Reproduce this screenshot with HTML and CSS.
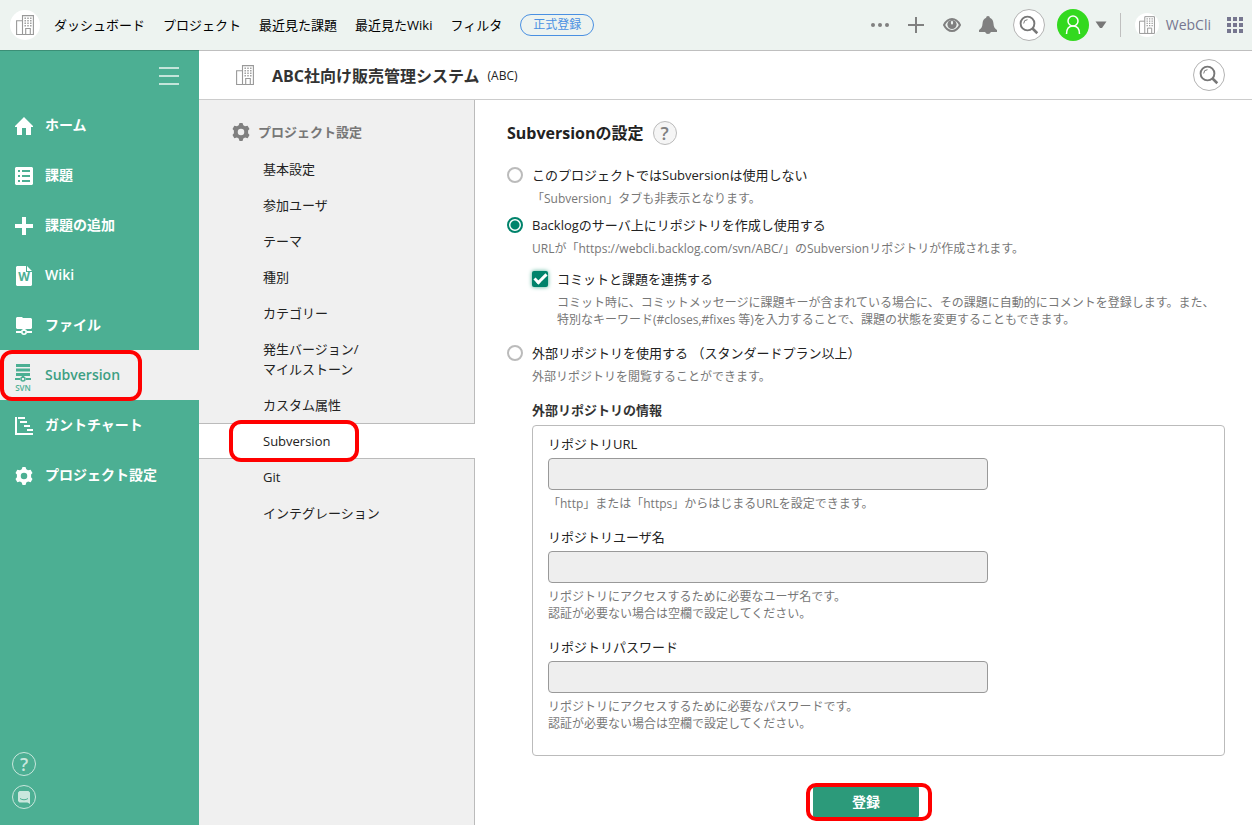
FILE: index.html
```html
<!DOCTYPE html>
<html lang="ja">
<head>
<meta charset="utf-8">
<meta name="viewport" content="width=device-width, initial-scale=1">
<title>Subversionの設定</title>
<link rel="stylesheet" href="styles.css">
</head>
<body>
<svg class="defs" aria-hidden="true">
  <symbol id="building" viewBox="0 0 18 20">
    <path d="M6.5 5.7H.6v13.8H17.4V.6H6.5v18.9M9.7 19.5v-6h4.600v6" fill="none" stroke="currentColor" stroke-width="1.100"/>
    <path d="M9.2 2.500v9M12 2.500v9M14.800 2.500v9" stroke="currentColor" stroke-width="1.400" stroke-dasharray="1.400 1.100"/>
  </symbol>
  <symbol id="search" viewBox="0 0 20 20">
    <circle cx="8.500" cy="8.500" r="6.900" fill="none" stroke="currentColor" stroke-width="1.900"/>
    <path d="M4.700 8.500a3.800 3.800 0 0 1 3.800-3.800" fill="none" stroke="currentColor"/>
    <path d="M13.500 13.500l4.800 4.700" stroke="currentColor" stroke-width="2.600"/>
  </symbol>
  <symbol id="gear" viewBox="0 0 18 18">
    <path fill="currentColor" fill-rule="evenodd" d="M7.500 0h3l.8 2.300 1.700 1 2.600-.6 1.900 3.300-1.400 1.600v2.600l1.400 1.700-1.800 3.300-2.600-.6-1.800 1-.8 2.400h-3l-.8-2.400-1.800-1-2.600.6L.5 11.900l1.400-1.700V7.600L.5 6l1.800-3.300 2.700.6 1.700-1zM9 5.700a3.200 3.200 0 1 0 0 6.500 3.200 3.200 0 0 0 0-6.500z"/>
  </symbol>
</svg>

<header class="topbar">
  <a class="round-logo" href="#" aria-label="スペース"><svg width="18" height="20"><use href="#building"/></svg></a>
  <nav class="top-nav">
    <a href="#">ダッシュボード</a>
    <a href="#">プロジェクト</a>
    <a href="#">最近見た課題</a>
    <a href="#">最近見たWiki</a>
    <a href="#">フィルタ</a>
    <a class="pill" href="#">正式登録</a>
  </nav>
  <div class="tools">
    <button class="tool" aria-label="その他"><svg width="18" height="18" fill="currentColor"><circle cx="2" cy="9" r="2"/><circle cx="9" cy="9" r="2"/><circle cx="16" cy="9" r="2"/></svg></button>
    <button class="tool" aria-label="追加"><svg width="18" height="18"><path d="M9 1v16M1 9h16" stroke="currentColor" stroke-width="2"/></svg></button>
    <button class="tool" aria-label="ウォッチ"><svg width="18" height="18"><path d="M1 9c2-4 4.700-6 8-6s6 2 8 6c-2 4-4.700 6-8 6s-6-2-8-6z" fill="none" stroke="currentColor" stroke-width="2"/><circle cx="9" cy="8.500" r="4.600" fill="currentColor"/><ellipse cx="9" cy="6.700" rx="1.100" ry="1.900" fill="#edf3f0"/></svg></button>
    <button class="tool" aria-label="お知らせ"><svg width="18" height="18" fill="currentColor"><path d="M9 0c1.200 0 1.800.8 1.800 1.700 2.600.9 3.500 3 3.700 6 .2 3.200 1.100 4.800 3.500 6.200V16h-6.200c-.3 1.200-1.400 2-2.800 2s-2.500-.8-2.800-2H0v-2.100c2.400-1.400 3.300-3 3.500-6.200.2-3 1.100-5.100 3.700-6C7.200.8 7.800 0 9 0z"/></svg></button>
  </div>
  <button class="search-button" aria-label="検索"><svg width="20" height="20"><use href="#search"/></svg></button>
  <button class="account" aria-label="アカウント">
    <span class="avatar"><svg width="16" height="20" fill="none" stroke="#fff" stroke-width="1.500"><circle cx="8" cy="6" r="5"/><path d="M1.500 19c0-5 2.500-8 6.500-8s6.500 3 6.500 8"/></svg></span>
    <svg width="12" height="8"><path d="M.5.500h11L7 7H5z" fill="currentColor"/></svg>
  </button>
  <a class="space" href="#">
    <span class="round-logo small"><svg width="16" height="18"><use href="#building"/></svg></span>
    WebCli
  </a>
  <button class="tool apps" aria-label="アプリ"><svg width="16" height="16" fill="currentColor"><path d="M0 0h4v4H0zM6 0h4v4H6zM12 0h4v4h-4zM0 6h4v4H0zM6 6h4v4H6zM12 6h4v4h-4zM0 12h4v4H0zM6 12h4v4H6zM12 12h4v4h-4z"/></svg></button>
</header>

<div class="shell">
  <aside class="sidebar">
    <button class="menu-toggle" aria-label="メニュー"><svg width="20" height="18"><path d="M0 1h20M0 9h20M0 17h20" stroke="currentColor" stroke-width="2"/></svg></button>
    <nav class="side-nav">
      <a href="#"><svg width="18" height="20" fill="currentColor"><path d="M9 1l9 9v1h-2v8h-5v-7H7v7H2v-8H0v-1z"/></svg>ホーム</a>
      <a href="#"><svg width="18" height="20" fill="currentColor"><path fill-rule="evenodd" d="M1 1h16l1 1v16l-1 1H1l-1-1V2zM3 4v2h2V4zm4 0v2h8V4zM3 9v2h2V9zm4 0v2h8V9zM3 14v2h2v-2zm4 0v2h8v-2z"/></svg>課題</a>
      <a href="#"><svg width="18" height="20"><path d="M9 1v18M0 10h18" stroke="currentColor" stroke-width="4"/></svg>課題の追加</a>
      <a href="#"><svg width="18" height="20"><path fill="currentColor" d="M1 1l1-1h9v6h6v13l-1 1H2l-1-1zM12 0l5 5h-5z"/><text class="wiki-letter" x="9" y="15" text-anchor="middle">W</text></svg>Wiki</a>
      <a href="#"><svg width="18" height="20"><path fill="currentColor" d="M1 2l1-1h5l1 1h8l1 1v9l-1 1H2l-1-1z"/><path d="M9 13v2M1 16h5M12 16h5" stroke="currentColor" stroke-width="2"/><circle cx="9" cy="16" r="2.200" fill="none" stroke="currentColor" stroke-width="1.600"/></svg>ファイル</a>
      <a class="current marked" href="#" aria-current="page"><svg width="18" height="34"><path fill="currentColor" d="M1 5h14v3H1zM1 9.500h14v3H1zM1 14h14v3H1z"/><path d="M8 17v2M0 20h5M11 20h5" stroke="currentColor" stroke-width="2"/><circle cx="8" cy="20" r="2" fill="none" stroke="currentColor" stroke-width="1.600"/><text class="svn-letter" x="8" y="32" text-anchor="middle">SVN</text></svg>Subversion</a>
      <a href="#"><svg width="18" height="20"><path d="M1 1v17h17M3 2h7M5 6h7M9 10h6M12 14h6" fill="none" stroke="currentColor" stroke-width="2"/></svg>ガントチャート</a>
      <a href="#"><svg width="18" height="18"><use href="#gear"/></svg>プロジェクト設定</a>
    </nav>
    <div class="side-help">
      <button aria-label="ヘルプ">?</button>
      <button aria-label="メッセージ"><svg width="12" height="13"><path d="M1.500 0h9l1.500 1.500V13l-2.500-1.500h-8L0 10V1.500z" fill="currentColor"/><path d="M2 7.500c2.300 1.700 5.700 1.700 8 0" fill="none" stroke="#4caf93"/></svg></button>
    </div>
  </aside>

  <div class="project">
    <header class="project-bar">
      <svg class="project-icon" width="18" height="20"><use href="#building"/></svg>
      <h1>ABC社向け販売管理システム</h1>
      <span class="project-key">(ABC)</span>
      <button class="search-button" aria-label="プロジェクト内検索"><svg width="20" height="20"><use href="#search"/></svg></button>
    </header>
    <div class="columns">
      <nav class="settings-nav">
        <h2><svg width="18" height="18"><use href="#gear"/></svg>プロジェクト設定</h2>
        <a href="#">基本設定</a>
        <a href="#">参加ユーザ</a>
        <a href="#">テーマ</a>
        <a href="#">種別</a>
        <a href="#">カテゴリー</a>
        <a href="#">発生バージョン/<br>マイルストーン</a>
        <a href="#">カスタム属性</a>
        <a class="selected marked" href="#" aria-current="page">Subversion</a>
        <a href="#">Git</a>
        <a href="#">インテグレーション</a>
        <div class="filler"></div>
      </nav>
      <main class="content">
        <div class="page-title">
          <h2>Subversionの設定</h2>
          <button class="help" aria-label="ヘルプ">?</button>
        </div>
        <form>
          <div class="option">
            <input type="radio" name="mode" id="mode-none">
            <label for="mode-none">このプロジェクトではSubversionは使用しない</label>
            <p>「Subversion」タブも非表示となります。</p>
          </div>
          <div class="option">
            <input type="radio" name="mode" id="mode-backlog" checked>
            <label for="mode-backlog">Backlogのサーバ上にリポジトリを作成し使用する</label>
            <p>URLが「https://webcli.backlog.com/svn/ABC/」のSubversionリポジトリが作成されます。</p>
            <div class="option nested">
              <input type="checkbox" id="link-commit" checked>
              <label for="link-commit">コミットと課題を連携する</label>
              <p>コミット時に、コミットメッセージに課題キーが含まれている場合に、その課題に自動的にコメントを登録します。また、<br>特別なキーワード(#closes,#fixes 等)を入力することで、課題の状態を変更することもできます。</p>
            </div>
          </div>
          <div class="option external">
            <input type="radio" name="mode" id="mode-external">
            <label for="mode-external">外部リポジトリを使用する （スタンダードプラン以上）</label>
            <p>外部リポジトリを閲覧することができます。</p>
          </div>
          <section class="repository">
            <h3>外部リポジトリの情報</h3>
            <div class="panel">
              <div class="field">
                <label for="repo-url">リポジトリURL</label>
                <input type="text" id="repo-url" disabled>
                <p>「http」または「https」からはじまるURLを設定できます。</p>
              </div>
              <div class="field">
                <label for="repo-user">リポジトリユーザ名</label>
                <input type="text" id="repo-user" disabled>
                <p>リポジトリにアクセスするために必要なユーザ名です。<br>認証が必要ない場合は空欄で設定してください。</p>
              </div>
              <div class="field">
                <label for="repo-pass">リポジトリパスワード</label>
                <input type="password" id="repo-pass" disabled>
                <p>リポジトリにアクセスするために必要なパスワードです。<br>認証が必要ない場合は空欄で設定してください。</p>
              </div>
            </div>
          </section>
          <div class="actions"><span class="marked submit-wrap"><button class="submit" type="submit">登録</button></span></div>
        </form>
      </main>
    </div>
  </div>
</div>
</body>
</html>
```
FILE: styles.css
```css
*, *::before, *::after { box-sizing: border-box; }

body {
  margin: 0;
  min-height: 100vh;
  display: flex;
  flex-direction: column;
  background: #fff;
  color: #222;
  font: 13px/20px "Open Sans", "Noto Sans CJK JP", sans-serif;
}

h1, h2, h3, p { margin: 0; }
a { color: inherit; text-decoration: none; }
svg { display: block; flex: none; }
button {
  padding: 0;
  border: 0;
  background: none;
  color: inherit;
  font: inherit;
  cursor: pointer;
}
.defs { position: absolute; width: 0; height: 0; }

/* Hand-drawn emphasis rings */
.marked { position: relative; }
.marked::after {
  content: "";
  position: absolute;
  border: 4px solid #f00;
  border-radius: 12px;
  pointer-events: none;
}

/* Top bar */
.topbar {
  display: flex;
  align-items: center;
  height: 51px;
  padding: 0 9px 0 10px;
  background: #edf3f0;
  border-bottom: 1px solid #bfbfbf;
  white-space: nowrap;
}
.round-logo {
  display: flex;
  align-items: center;
  justify-content: center;
  width: 30px;
  height: 30px;
  border-radius: 50%;
  background: #fff;
  color: #999;
}
.round-logo.small { width: 24px; height: 24px; }
.top-nav {
  display: flex;
  align-items: center;
  gap: 18px;
  margin-left: 14px;
  color: #000;
}
.pill {
  padding: 0 12px;
  border: 1px solid #4a90e2;
  border-radius: 11px;
  color: #4a90e2;
  font-size: 12px;
}
.tools {
  display: flex;
  gap: 18px;
  margin-left: auto;
  margin-right: 16px;
}
.tool { color: #808080; }
.search-button {
  display: flex;
  align-items: center;
  justify-content: center;
  width: 32px;
  height: 32px;
  border: 1px solid #b3b3b3;
  border-radius: 50%;
  background: #fff;
  color: #777;
}
.account {
  display: flex;
  align-items: center;
  gap: 6px;
  margin: 0 13px 0 12px;
  color: #777;
}
.avatar {
  display: flex;
  align-items: center;
  justify-content: center;
  width: 32px;
  height: 32px;
  border-radius: 50%;
  background: #33d91f;
}
.space {
  display: flex;
  align-items: center;
  gap: 7px;
  height: 24px;
  padding-left: 14px;
  border-left: 1px solid #bfbfbf;
  color: #76768f;
  font-size: 14px;
}
.apps { margin-left: 16px; color: #76768f; }

/* Left navigation */
.shell { display: flex; flex: 1; }
.sidebar {
  flex: none;
  display: flex;
  flex-direction: column;
  width: 199px;
  margin-top: -1px;
  padding-bottom: 16px;
  border-top: 1px solid #3b8f76;
  background: #4caf93;
  color: #fff;
}
.menu-toggle {
  align-self: flex-end;
  height: 49px;
  padding: 0 20px;
  color: #c4e5da;
}
.side-nav a {
  display: flex;
  align-items: center;
  gap: 12px;
  height: 50px;
  padding-left: 15px;
  font-size: 14px;
  font-weight: 600;
}
.side-nav svg { margin-top: 2px; }
.side-nav .current { background: #f0f0f0; color: #3d9f83; }
.side-nav .current svg { color: #4caf93; }
.side-nav .marked::after { top: 0; left: 0; width: 142px; height: 51px; z-index: 1; }
.wiki-letter { fill: #4caf93; font: 700 12px "Open Sans", sans-serif; }
.svn-letter { fill: #4caf93; font: 600 8px "Open Sans", sans-serif; }
.side-help {
  display: flex;
  flex-direction: column;
  gap: 9px;
  margin-top: auto;
  padding-left: 12px;
}
.side-help button {
  display: flex;
  align-items: center;
  justify-content: center;
  width: 24px;
  height: 24px;
  border: 1px solid #c9e7dd;
  border-radius: 50%;
  color: #c9e7dd;
  font-size: 18px;
  font-weight: 600;
}

/* Project header */
.project {
  flex: 1;
  min-width: 0;
  display: flex;
  flex-direction: column;
}
.project-bar {
  display: flex;
  align-items: center;
  height: 49px;
  padding: 0 27px 0 37px;
  border-bottom: 1px solid #ccc;
}
.project-icon { color: #999; }
.project-bar h1 {
  margin: 0 8px 0 18px;
  padding-top: 2px;
  color: #333;
  font-size: 16px;
}
.project-key { padding-top: 2px; font-size: 12px; }
.project-bar .search-button { margin-left: auto; }
.columns { display: flex; flex: 1; }

/* Settings navigation */
.settings-nav {
  flex: none;
  display: flex;
  flex-direction: column;
  width: 276px;
  background: #f0f0f0;
}
.settings-nav h2 {
  display: flex;
  align-items: center;
  gap: 8px;
  height: 51px;
  padding: 12px 0 0 33px;
  border-right: 1px solid #bbb;
  color: #777;
  font-size: 13px;
  font-weight: 600;
}
.settings-nav h2 svg { color: #808080; }
.settings-nav a {
  padding: 8px 0 8px 64px;
  border-right: 1px solid #bbb;
}
.settings-nav .selected {
  padding: 7px 0 7px 64px;
  border: solid #bbb;
  border-width: 1px 0;
  background: #fff;
}
.settings-nav .marked::after { top: -4px; left: 30px; width: 130px; height: 42px; }
.filler { flex: 1; border-right: 1px solid #bbb; }

/* Settings form */
.content {
  flex: 1;
  min-width: 0;
  padding: 21px 27px 7px 32px;
}
.page-title {
  display: flex;
  align-items: center;
  gap: 9px;
  margin-bottom: 20px;
}
.page-title h2 { font-size: 16px; line-height: 24px; }
.help {
  width: 24px;
  height: 24px;
  border: 1px solid #bbb;
  border-radius: 50%;
  background: #f5f5f5;
  color: #808080;
  font-size: 18px;
  font-weight: 600;
}
.option {
  display: grid;
  grid-template-columns: 16px 1fr;
  column-gap: 9px;
  row-gap: 5px;
  align-items: center;
  margin-bottom: 8px;
}
.option > p, .nested { grid-column: 2; }
.nested { margin: 7px 0; }
.option.external { margin-bottom: 15px; }
.option p, .field p {
  color: #777;
  font-size: 12px;
  line-height: 17px;
}
.option input {
  appearance: none;
  width: 16px;
  height: 16px;
  margin: 0;
  border: 2px solid #bbb;
  border-radius: 50%;
}
.option input[type="radio"]:checked {
  border-color: #00836b;
  background: radial-gradient(circle, #00836b 4px, #fff 5px);
}
.option input[type="checkbox"] {
  border: 0;
  border-radius: 2px;
  background: #00836b;
  box-shadow: 0 0 4px #4caf93;
}
.option input[type="checkbox"]:checked::before {
  content: "";
  display: block;
  width: 13px;
  height: 7px;
  margin: 3px 2px;
  border: solid #fff;
  border-width: 0 0 3px 3px;
  transform: rotate(-45deg);
}
.repository { margin-left: 25px; }
.repository h3 { margin-bottom: 5px; font-size: 13px; color: #333; }
.panel {
  display: flex;
  flex-direction: column;
  gap: 15px;
  padding: 8px 15px 23px;
  border: 1px solid #bbb;
  border-radius: 4px;
}
.field label { display: block; margin-bottom: 4px; }
.field input {
  display: block;
  width: 100%;
  max-width: 440px;
  height: 32px;
  margin-bottom: 5px;
  padding: 0 8px;
  border: 1px solid #999;
  border-radius: 4px;
  background: #eee;
  font: inherit;
}
.actions {
  display: flex;
  justify-content: center;
  margin-top: 30px;
}
.submit-wrap.marked::after { top: -3px; left: -7px; width: 126px; height: 38px; border-radius: 10px; }
.submit {
  display: block;
  width: 106px;
  height: 32px;
  border-radius: 3px;
  background: #2c9a7a;
  color: #fff;
  font-size: 14px;
  font-weight: 700;
}
```
